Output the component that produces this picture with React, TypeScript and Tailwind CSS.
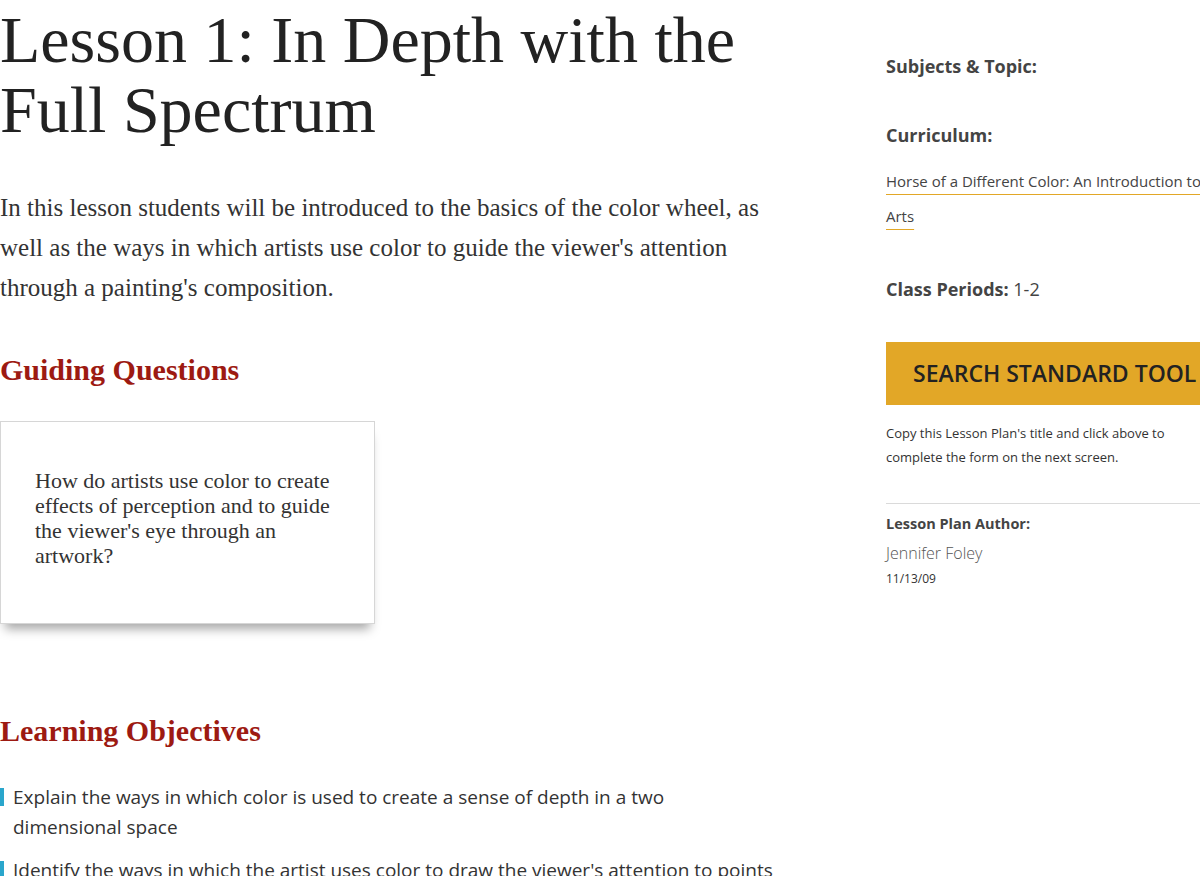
const serif = "font-['Liberation_Serif','Times_New_Roman',serif]";
const sans = "font-['Open_Sans','Noto_Sans',sans-serif]";

const objectives = [
  'Explain the ways in which color is used to create a sense of depth in a two dimensional space',
  "Identify the ways in which the artist uses color to draw the viewer's attention to points of interest in the composition",
];

function Objective({ text }: { text: string }) {
  return (
    <li className="flex gap-[9px]">
      <span className="mt-[6px] h-[18px] w-[4px] shrink-0 bg-[#2aa6cc]" />
      <span className="max-w-[761px] text-[19px] leading-[30px] text-[#333]">{text}</span>
    </li>
  );
}

function Sidebar() {
  return (
    <aside className={`${sans} ml-[86px] w-[410px] shrink-0 pt-[54px] text-[#444]`}>
      <h4 className="text-[18px] font-bold leading-[24px]">Subjects &amp; Topic:</h4>

      <h4 className="mt-[45px] text-[18px] font-bold leading-[24px]">Curriculum:</h4>
      <div className="mt-[17px] text-[15px] leading-[35px]">
        <a className="underline decoration-[#e2a727] decoration-1 underline-offset-[7px]">
          Horse of a Different Color: An Introduction to the Visual Arts
        </a>
      </div>

      <p className="mt-[43px] text-[18px] leading-[24px]">
        <span className="font-bold">Class Periods:</span> 1-2
      </p>

      <button className="mt-[41px] flex h-[63px] w-full items-center bg-[#e2a727] pl-[27px] text-left text-[23px] font-semibold whitespace-nowrap text-[#222]">
        SEARCH STANDARD TOOL
      </button>
      <p className="mt-[16px] w-[300px] text-[13px] leading-[24px] text-[#333]">
        Copy this Lesson Plan's title and click above to complete the form on the next screen.
      </p>

      <div className="mt-[34px] border-t border-[#dadada] pt-[10px]">
        <h5 className="text-[14.5px] font-bold leading-[20px]">Lesson Plan Author:</h5>
        <p className="mt-[7px] text-[16px] font-light leading-[24px] text-[#555]">Jennifer Foley</p>
        <p className="mt-[5px] text-[12px] leading-[18px] text-[#333]">11/13/09</p>
      </div>
    </aside>
  );
}

export default function App() {
  return (
    <div className="flex h-[876px] w-[1200px] overflow-hidden bg-white">
      <main className="w-[800px] shrink-0">
        <h1 className={`${serif} mt-[5px] text-[66px] leading-[70px] text-[#222]`}>
          Lesson 1: In Depth with the Full Spectrum
        </h1>
        <p className={`${serif} mt-[43px] w-[780px] text-[25px] leading-[40px] text-[#333]`}>
          In this lesson students will be introduced to the basics of the color wheel, as well as the
          ways in which artists use color to guide the viewer's attention through a painting's
          composition.
        </p>

        <h2 className={`${serif} mt-[44px] text-[30px] font-bold leading-[36px] text-[#9d1a12]`}>
          Guiding Questions
        </h2>
        <div className="mt-[33px] h-[203px] w-[375px] border border-[#d6d6d6] bg-white px-[34px] pt-[46px] shadow-[0_10px_10px_-5px_rgba(0,0,0,0.35)]">
          <p className={`${serif} text-[22px] leading-[25px] text-[#333]`}>
            How do artists use color to create effects of perception and to guide the viewer's eye
            through an artwork?
          </p>
        </div>

        <h2 className={`${serif} mt-[89px] text-[30px] font-bold leading-[36px] text-[#9d1a12]`}>
          Learning Objectives
        </h2>
        <ul className={`${sans} mt-[33px] flex flex-col gap-[13px]`}>
          {objectives.map((o) => (
            <Objective key={o} text={o} />
          ))}
        </ul>
      </main>
      <Sidebar />
    </div>
  );
}
